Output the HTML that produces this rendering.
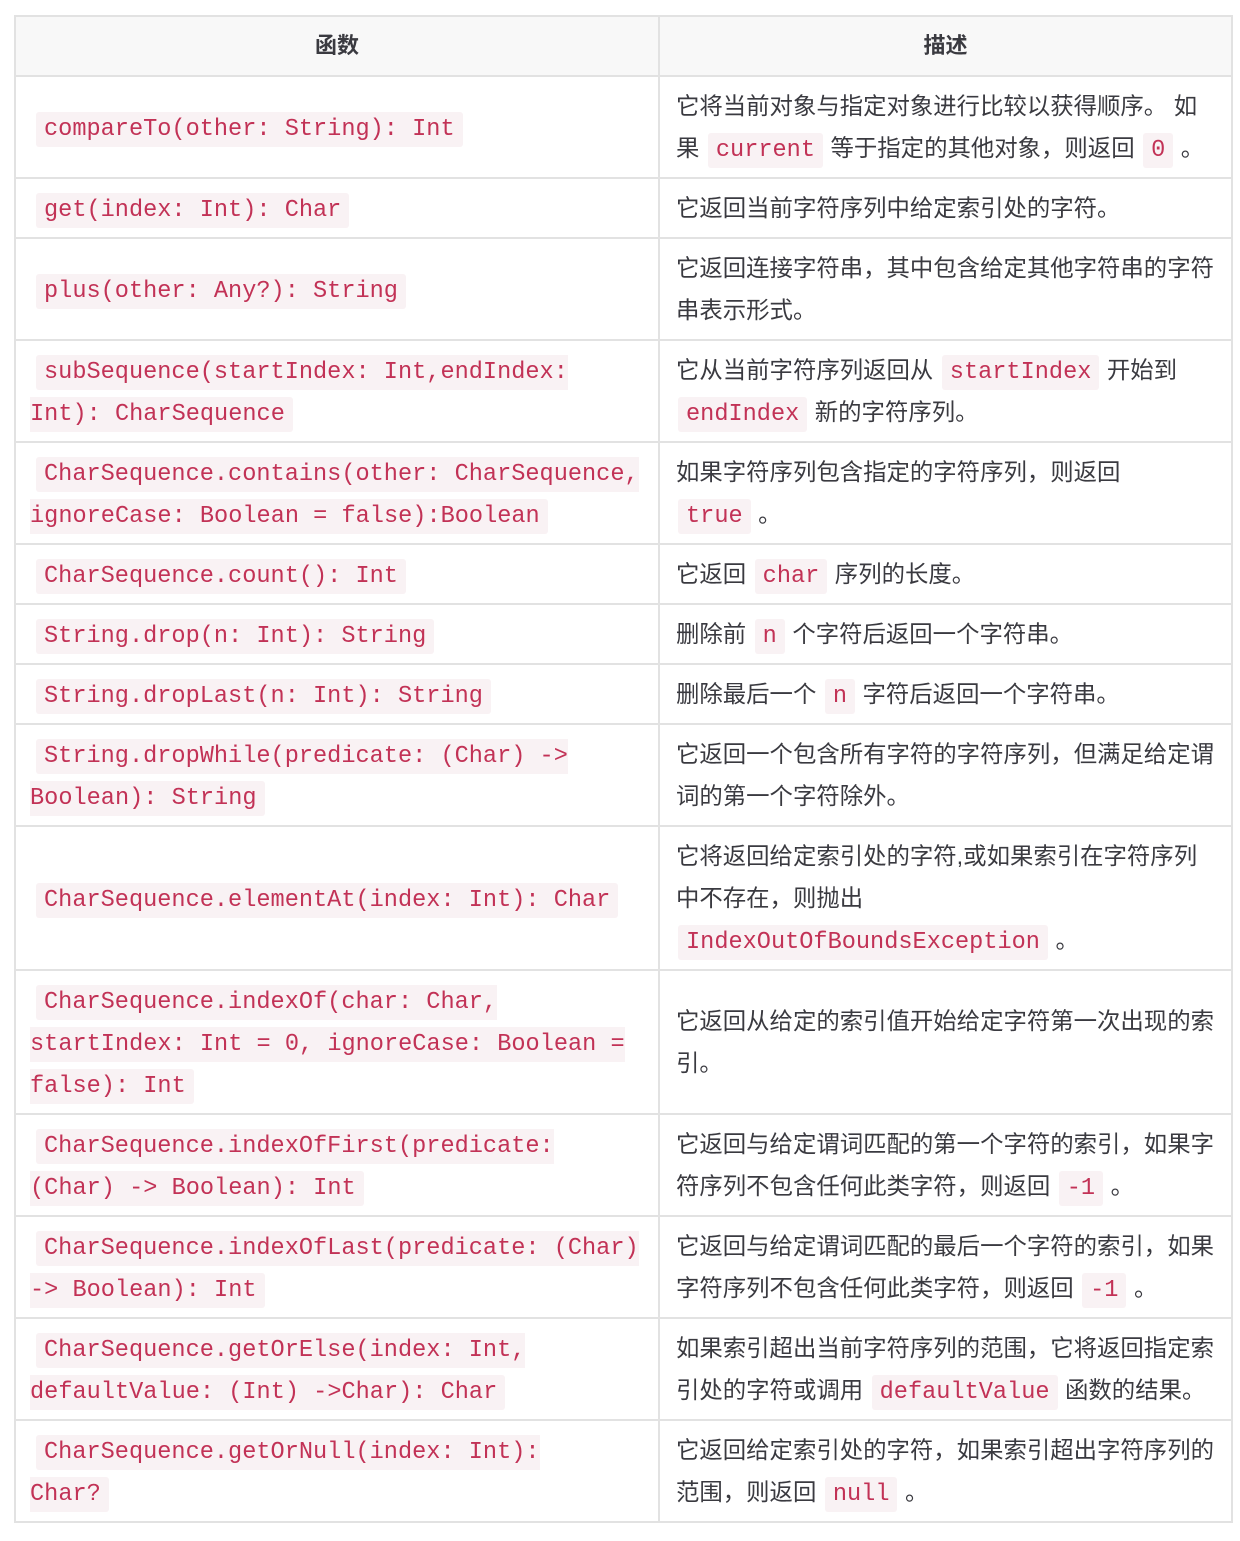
<!DOCTYPE html>
<html><head><meta charset="utf-8"><style>
body{margin:0;background:#fff;}
table{position:absolute;left:14px;top:15px;width:1219px;border-collapse:collapse;table-layout:fixed;font-family:"Liberation Sans","Noto Sans CJK SC",sans-serif;font-size:23.4px;color:#3a3a40;}
td,th{border:2px solid #e2e2e2;padding:8px 14px;line-height:42px;height:42px;white-space:nowrap;vertical-align:middle;}
th{background:#f8f8f8;font-weight:bold;font-size:22px;}
td.r{padding-left:16px;}
code{font-family:"Liberation Mono",monospace;font-size:23.6px;line-height:1;color:#c23256;background:#f9f2f4;border-radius:3px;padding:4px 8px;margin:0 2px 0 6px;}
td.r code{margin:0 1px 0 2px;}
</style></head><body>
<table>
<colgroup><col style="width:644px"><col></colgroup>
<tr><th>函数</th><th>描述</th></tr>
<tr><td><code>compareTo(other: String): Int</code></td><td class="r">它将当前对象与指定对象进行比较以获得顺序。 如<br>果 <code>current</code> 等于指定的其他对象，则返回 <code>0</code> 。</td></tr>
<tr><td><code>get(index: Int): Char</code></td><td class="r">它返回当前字符序列中给定索引处的字符。</td></tr>
<tr><td><code>plus(other: Any?): String</code></td><td class="r">它返回连接字符串，其中包含给定其他字符串的字符<br>串表示形式。</td></tr>
<tr><td><code>subSequence(startIndex: Int,endIndex:<br>Int): CharSequence</code></td><td class="r">它从当前字符序列返回从 <code>startIndex</code> 开始到<br><code>endIndex</code> 新的字符序列。</td></tr>
<tr><td><code>CharSequence.contains(other: CharSequence,<br>ignoreCase: Boolean = false):Boolean</code></td><td class="r">如果字符序列包含指定的字符序列，则返回<br><code>true</code> 。</td></tr>
<tr><td><code>CharSequence.count(): Int</code></td><td class="r">它返回 <code>char</code> 序列的长度。</td></tr>
<tr><td><code>String.drop(n: Int): String</code></td><td class="r">删除前 <code>n</code> 个字符后返回一个字符串。</td></tr>
<tr><td><code>String.dropLast(n: Int): String</code></td><td class="r">删除最后一个 <code>n</code> 字符后返回一个字符串。</td></tr>
<tr><td><code>String.dropWhile(predicate: (Char) -><br>Boolean): String</code></td><td class="r">它返回一个包含所有字符的字符序列，但满足给定谓<br>词的第一个字符除外。</td></tr>
<tr><td><code>CharSequence.elementAt(index: Int): Char</code></td><td class="r">它将返回给定索引处的字符,或如果索引在字符序列<br>中不存在，则抛出<br><code>IndexOutOfBoundsException</code> 。</td></tr>
<tr><td><code>CharSequence.indexOf(char: Char,<br>startIndex: Int = 0, ignoreCase: Boolean =<br>false): Int</code></td><td class="r">它返回从给定的索引值开始给定字符第一次出现的索<br>引。</td></tr>
<tr><td><code>CharSequence.indexOfFirst(predicate:<br>(Char) -> Boolean): Int</code></td><td class="r">它返回与给定谓词匹配的第一个字符的索引，如果字<br>符序列不包含任何此类字符，则返回 <code>-1</code> 。</td></tr>
<tr><td><code>CharSequence.indexOfLast(predicate: (Char)<br>-> Boolean): Int</code></td><td class="r">它返回与给定谓词匹配的最后一个字符的索引，如果<br>字符序列不包含任何此类字符，则返回 <code>-1</code> 。</td></tr>
<tr><td><code>CharSequence.getOrElse(index: Int,<br>defaultValue: (Int) ->Char): Char</code></td><td class="r">如果索引超出当前字符序列的范围，它将返回指定索<br>引处的字符或调用 <code>defaultValue</code> 函数的结果。</td></tr>
<tr><td><code>CharSequence.getOrNull(index: Int):<br>Char?</code></td><td class="r">它返回给定索引处的字符，如果索引超出字符序列的<br>范围，则返回 <code>null</code> 。</td></tr>
</table>
</body></html>
